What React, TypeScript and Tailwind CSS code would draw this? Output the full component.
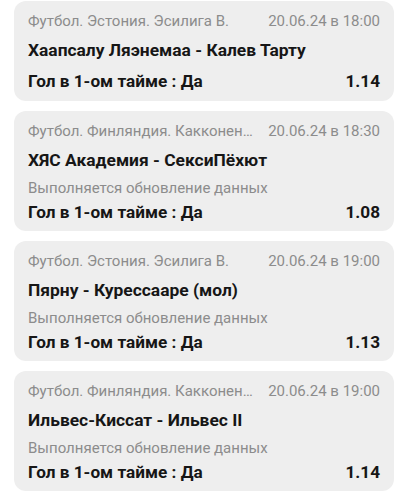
type Bet = {
  league: string;
  date: string;
  match: string;
  updating: boolean;
  market: string;
  odds: string;
};

const bets: Bet[] = [
  {
    league: "Футбол. Эстония. Эсилига В.",
    date: "20.06.24 в 18:00",
    match: "Хаапсалу Ляэнемаа - Калев Тарту",
    updating: false,
    market: "Гол в 1-ом тайме : Да",
    odds: "1.14",
  },
  {
    league: "Футбол. Финляндия. Какконен…",
    date: "20.06.24 в 18:30",
    match: "ХЯС Академия - СексиПёхют",
    updating: true,
    market: "Гол в 1-ом тайме : Да",
    odds: "1.08",
  },
  {
    league: "Футбол. Эстония. Эсилига В.",
    date: "20.06.24 в 19:00",
    match: "Пярну - Курессааре (мол)",
    updating: true,
    market: "Гол в 1-ом тайме : Да",
    odds: "1.13",
  },
  {
    league: "Футбол. Финляндия. Какконен…",
    date: "20.06.24 в 19:00",
    match: "Ильвес-Киссат - Ильвес II",
    updating: true,
    market: "Гол в 1-ом тайме : Да",
    odds: "1.14",
  },
];

function BetCard({ bet }: { bet: Bet }) {
  return (
    <div className="bg-[#eeeeee] rounded-xl px-[14px] pt-[10px] pb-[6px]">
      <div className="flex items-center justify-between gap-2 h-5 text-[15px] text-[#8c8c8c] whitespace-nowrap">
        <span className="truncate min-w-0">{bet.league}</span>
        <span className="shrink-0">{bet.date}</span>
      </div>
      <div className="mt-[7px] h-6 flex items-center text-[17.4px] font-bold text-[#161616]">
        {bet.match}
      </div>
      {bet.updating && (
        <div className="mt-[6px] h-5 flex items-center text-[15px] text-[#8c8c8c]">
          Выполняется обновление данных
        </div>
      )}
      <div
        className={`${
          bet.updating ? "mt-[3px]" : "mt-[8px] mb-px"
        } h-6 flex items-center justify-between text-[17.2px] font-bold text-[#161616]`}
      >
        <span>{bet.market}</span>
        <span>{bet.odds}</span>
      </div>
    </div>
  );
}

export default function App() {
  return (
    <div
      className="w-[408px] h-[500px] bg-white px-[14px] pt-px flex flex-col gap-[10px] overflow-hidden"
      style={{ fontFamily: "Roboto, 'Noto Sans', sans-serif" }}
    >
      {bets.map((bet, i) => (
        <BetCard key={i} bet={bet} />
      ))}
    </div>
  );
}
